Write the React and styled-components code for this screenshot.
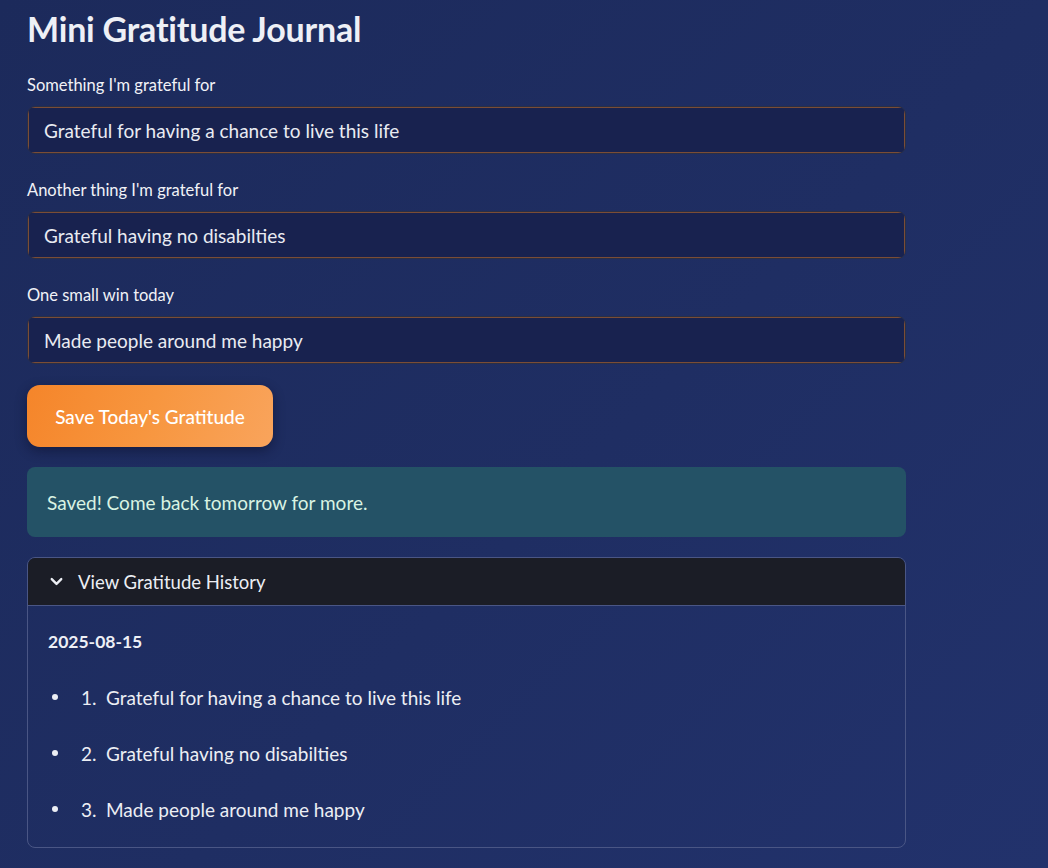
import React from "react";
import styled, { createGlobalStyle } from "styled-components";
import { ChevronDown } from "lucide-react";

const Global = createGlobalStyle`
  html, body { margin: 0; padding: 0; }
  body {
    background: linear-gradient(135deg, #1c2a5b 0%, #1f2e63 55%, #22326c 100%);
    min-height: 868px;
    font-family: Lato, "Noto Sans", sans-serif;
    color: #eceef4;
  }
`;

const Page = styled.div`
  min-height: 868px;
  padding: 0 0 0 27px;
  box-sizing: border-box;
`;

const Main = styled.div`
  width: 879px;
  display: flex;
  flex-direction: column;
`;

const Title = styled.h1`
  margin: 8px 0 0;
  font-size: 34px;
  line-height: 42px;
  font-weight: 700;
  color: #eef0f6;
  letter-spacing: -0.2px;
`;

const Field = styled.div`
  display: flex;
  flex-direction: column;
  gap: 11px;
  margin-top: ${(p) => p.$top}px;
`;

const Label = styled.label`
  font-size: 16.5px;
  line-height: 20px;
  color: #f1f2f7;
`;

const InputShell = styled.div`
  height: 48px;
  border: 1px solid #2a2f45;
  border-radius: 8px;
  overflow: hidden;
  box-sizing: border-box;
  background: #18224f;
`;

const Input = styled.input`
  width: 100%;
  height: 100%;
  box-sizing: border-box;
  border: 1px solid #7b4d36;
  background: #18224f;
  color: #e9ebf2;
  font-family: Lato, "Noto Sans", sans-serif;
  font-size: 19px;
  padding: 0 15px;
  outline: none;
`;

const SaveButton = styled.button`
  align-self: flex-start;
  margin-top: 21px;
  width: 246px;
  height: 62px;
  border: none;
  border-radius: 13px;
  background: linear-gradient(110deg, #f5852a 0%, #f7963f 50%, #f9a45c 100%);
  color: #ffffff;
  font-family: Lato, "Noto Sans", sans-serif;
  font-size: 19px;
  font-weight: 500;
  box-shadow: 0 4px 12px rgba(8, 12, 35, 0.45);
  cursor: pointer;
`;

const Alert = styled.div`
  margin-top: 20px;
  height: 70px;
  border-radius: 8px;
  background: #245266;
  color: #d9f3e3;
  display: flex;
  align-items: center;
  padding: 0 20px;
  font-size: 19px;
  box-sizing: border-box;
`;

const Expander = styled.div`
  margin-top: 20px;
  border: 1px solid #4a5685;
  border-radius: 8px;
  overflow: hidden;
`;

const ExpanderHeader = styled.div`
  height: 47px;
  background: #1b1d26;
  border-bottom: 1px solid #4a5685;
  display: flex;
  align-items: center;
  gap: 12px;
  padding-left: 19px;
  font-size: 18.5px;
  color: #eceef4;
`;

const ExpanderBody = styled.div`
  padding: 24px 20px 10px;
`;

const DateHeading = styled.div`
  font-size: 17.5px;
  font-weight: 700;
  line-height: 24px;
  color: #eef0f6;
`;

const List = styled.ul`
  list-style: none;
  margin: 15px 0 0;
  padding: 0;
`;

const Item = styled.li`
  display: flex;
  align-items: center;
  height: 56px;
  font-size: 19px;
  color: #eceef4;
`;

const Bullet = styled.span`
  width: 6px;
  height: 6px;
  border-radius: 50%;
  background: #eceef4;
  margin: 0 0 0 4px;
  flex: none;
`;

const Num = styled.span`
  width: 25px;
  margin-left: 23px;
  flex: none;
`;

const fields = [
  ["Something I'm grateful for", "Grateful for having a chance to live this life"],
  ["Another thing I'm grateful for", "Grateful having no disabilties"],
  ["One small win today", "Made people around me happy"],
];

export default function App() {
  return (
    <Page>
      <Global />
      <Main>
        <Title>Mini Gratitude Journal</Title>
        {fields.map(([label, value], i) => (
          <Field key={label} $top={i === 0 ? 25 : 26}>
            <Label>{label}</Label>
            <InputShell>
              <Input defaultValue={value} />
            </InputShell>
          </Field>
        ))}
        <SaveButton>Save Today's Gratitude</SaveButton>
        <Alert>Saved! Come back tomorrow for more.</Alert>
        <Expander>
          <ExpanderHeader>
            <ChevronDown size={19} strokeWidth={3} />
            View Gratitude History
          </ExpanderHeader>
          <ExpanderBody>
            <DateHeading>2025-08-15</DateHeading>
            <List>
              {fields.map(([, value], i) => (
                <Item key={i}>
                  <Bullet />
                  <Num>{i + 1}.</Num>
                  {value}
                </Item>
              ))}
            </List>
          </ExpanderBody>
        </Expander>
      </Main>
    </Page>
  );
}
